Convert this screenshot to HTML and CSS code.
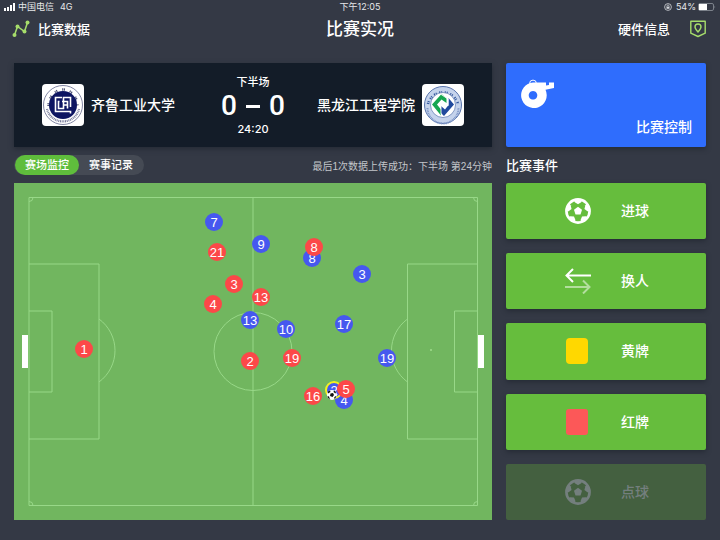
FILE: index.html
```html
<!DOCTYPE html>
<html lang="zh-CN">
<head>
<meta charset="utf-8">
<meta name="viewport" content="width=device-width, initial-scale=1">
<title>比赛实况</title>
<link rel="stylesheet" href="styles.css">
</head>
<body>
<svg class="defs" width="0" height="0" aria-hidden="true">
  <defs>
    <symbol id="ball" viewBox="0 0 26 26">
      <circle cx="13" cy="13" r="11.6" fill="none" stroke="currentColor" stroke-width="2.6"/>
      <path fill="currentColor" d="M13 8.8l4 2.9-1.5 4.7h-5L9 11.700z"/>
      <g fill="currentColor">
        <path id="patch" d="M8.500 1.500h9L16.200 4.200 13 6.200 9.800 4.200z"/>
        <use href="#patch" transform="rotate(72 13 13)"/>
        <use href="#patch" transform="rotate(144 13 13)"/>
        <use href="#patch" transform="rotate(216 13 13)"/>
        <use href="#patch" transform="rotate(288 13 13)"/>
      </g>
    </symbol>
  </defs>
</svg>
<div class="app">
  <div class="status">
    <div class="status-side">
      <svg width="12" height="8" viewBox="0 0 12 8" fill="#fff" aria-hidden="true"><path d="M0 5h2v3H0zM3 4h2v4H3zM6 2h2v6H6zM9 0h2v8H9z"/></svg>
      <span>中国电信</span><span class="network">4G</span>
    </div>
    <span>下午12:05</span>
    <div class="status-side status-end">
      <svg width="8" height="8" viewBox="0 0 8 8" fill="none" stroke="#d5d8dc" aria-hidden="true"><circle cx="4" cy="4" r="3.400" stroke-width=".8"/><path d="M3 4V3a1 1 0 0 1 2 0v1" stroke-width=".7"/><path d="M2.500 3.800h3v2h-3z" fill="#d5d8dc" stroke="none"/></svg>
      <span class="percent">54%</span>
      <svg width="18" height="8" viewBox="0 0 18 8" aria-hidden="true"><rect x=".5" y=".5" width="15" height="7" rx="1.500" fill="none" stroke="#7c828b"/><path d="M1 1h8v6H1z" fill="#fff"/><path d="M16.500 2.500v3q1.500-1.500 0-3z" fill="#7c828b"/></svg>
    </div>
  </div>
  <header class="header">
    <a class="nav-link" href="#data">
      <svg width="18" height="18" viewBox="0 0 18 18" fill="#a6dd6b" stroke="#a6dd6b" aria-hidden="true"><path d="M2.500 15L5.500 6.500 12.500 11.500 15.500 2.500" fill="none" stroke-width="1.500"/><g stroke="none"><circle cx="2.500" cy="15" r="2"/><circle cx="5.500" cy="6.500" r="2"/><circle cx="12.500" cy="11.500" r="2"/><circle cx="15.500" cy="2.500" r="2"/></g></svg>
      <span>比赛数据</span>
    </a>
    <h1 class="title">比赛实况</h1>
    <a class="nav-link nav-end" href="#hardware">
      <span>硬件信息</span>
      <svg width="16" height="18" viewBox="0 0 16 18" fill="none" stroke="#a6dd6b" stroke-width="1.400" stroke-linejoin="round" aria-hidden="true"><path d="M.8 1.200h14.400v12L8 16.500.8 13.200z"/><path d="M8 12C5.800 9.600 5 8.200 5 7a3 3 0 0 1 6 0c0 1.200-.8 2.600-3 5z"/></svg>
    </a>
  </header>
  <main class="main">
    <section class="score">
      <div class="team">
        <svg class="crest" viewBox="0 0 42 42" aria-hidden="true">
          <rect width="42" height="42" rx="4" fill="#fff"/>
          <circle cx="21" cy="21" r="19.500" fill="#fff" stroke="#62678c" stroke-width=".8"/>
          <path d="M6.500 22A14.500 16.500 0 0 1 35.500 22" fill="none" stroke="#4b4f72" stroke-width="2.400" stroke-dasharray="1 .6 1.200 5"/>
          <path d="M5 25A16.500 16.500 0 0 0 37 25" fill="none" stroke="#777b9b" stroke-width="2.200" stroke-dasharray="1 .7"/>
          <circle cx="21" cy="21" r="14" fill="#0d1562"/>
          <path d="M20 13.500h-6.500v14H19M17.500 17.500h-1v7h5v-11h7v9.500M20 17.500h5.500v7M21.500 21H26M19 27.500h9.500v2" fill="none" stroke="#fff" stroke-width="1.600"/>
        </svg>
        <span>齐鲁工业大学</span>
      </div>
      <div class="result">
        <span class="period">下半场</span>
        <strong class="goals"><span>0</span><span class="dash"></span><span>0</span></strong>
        <span class="clock">24:20</span>
      </div>
      <div class="team team-away">
        <span>黑龙江工程学院</span>
        <svg class="crest" viewBox="0 0 42 42" aria-hidden="true">
          <rect width="42" height="42" rx="4" fill="#fff"/>
          <circle cx="21" cy="21" r="18.500" fill="#c5d3ec" stroke="#5874ad" stroke-width="1"/>
          <path d="M6 20A15.500 15.500 0 0 1 36 20" fill="none" stroke="#34599e" stroke-width="2.600" stroke-dasharray="1.200 .8 1 2.500"/>
          <path d="M5.500 24A15.500 15.500 0 0 0 36.500 24" fill="none" stroke="#7f97c7" stroke-width="2" stroke-dasharray="1 .7"/>
          <circle cx="21" cy="21" r="12.500" fill="#fff" stroke="#5874ad" stroke-width=".7"/>
          <path d="M19.500 10L10 20.500l9 11v-6L15 20.500l4.500-5 5 3.500V14z" fill="#16a650"/>
          <path d="M23.500 10.500L32 20.500 22 32l-3-3v-7l4 3.500 3.500-4.500V14z" fill="#214a9d"/>
          <path d="M18.500 10l7.500 5v7l-3.500-3-3.500 3.500v8" fill="none" stroke="#fff" stroke-width=".9"/>
        </svg>
      </div>
    </section>
    <button class="control" type="button">
      <svg width="36" height="30" viewBox="0 0 36 30" aria-hidden="true">
        <circle cx="13" cy="4.500" r="3.400" fill="none" stroke="#fff" stroke-width="1"/>
        <path fill="#fff" fill-rule="evenodd" d="M13 3.500h13v3l3-.5V3.500h5V9l-8.500 1.800A12.800 12.800 0 1 1 13 3.500zm0 8.500a4.300 4.300 0 1 0 .01 0z"/>
      </svg>
      <span>比赛控制</span>
    </button>
    <div class="toolbar">
      <div class="tabs" role="tablist">
        <button class="tab active" type="button" role="tab" aria-selected="true">赛场监控</button>
        <button class="tab" type="button" role="tab" aria-selected="false">赛事记录</button>
      </div>
      <span class="note">最后1次数据上传成功：下半场 第24分钟</span>
    </div>
    <h2 class="events-title">比赛事件</h2>
    <svg class="pitch" viewBox="0 0 478 337">
      <g class="lines">
        <path d="M15 14.500H463.500V322.500H15zM239 14.500v308M15 81h70v175H15M15 128h23v81H15M463.500 81H393.500v175h70M463.500 128h-23v81h23"/>
        <circle cx="239" cy="168.500" r="39"/>
        <path d="M85 136a39 39 0 0 1 0 63M393.500 136a39 39 0 0 0 0 63M15 18.500a4 4 0 0 0 4-4M15 318.500a4 4 0 0 1 4 4M463.500 18.500a4 4 0 0 1-4-4M463.500 318.500a4 4 0 0 0-4 4"/>
      </g>
      <circle cx="417" cy="167" r="1" fill="#a0dd8d"/>
      <path d="M8 152h6v33H8zM464 152h6v33h-6z" fill="#fff"/>
      <g class="player blue" transform="translate(200 39)"><circle r="9"/><text y="5">7</text></g>
      <g class="player red" transform="translate(203 69)"><circle r="9"/><text y="5">21</text></g>
      <g class="player blue" transform="translate(247 61)"><circle r="9"/><text y="5">9</text></g>
      <g class="player blue" transform="translate(298 75)"><circle r="9"/><text y="5">8</text></g>
      <g class="player red" transform="translate(300 64)"><circle r="9"/><text y="5">8</text></g>
      <g class="player blue" transform="translate(348 91)"><circle r="9"/><text y="5">3</text></g>
      <g class="player red" transform="translate(220 101)"><circle r="9"/><text y="5">3</text></g>
      <g class="player red" transform="translate(247 114)"><circle r="9"/><text y="5">13</text></g>
      <g class="player red" transform="translate(199 121)"><circle r="9"/><text y="5">4</text></g>
      <g class="player blue" transform="translate(236 137)"><circle r="9"/><text y="5">13</text></g>
      <g class="player blue" transform="translate(272 146)"><circle r="9"/><text y="5">10</text></g>
      <g class="player blue" transform="translate(330 141)"><circle r="9"/><text y="5">17</text></g>
      <g class="player red" transform="translate(70 166)"><circle r="9"/><text y="5">1</text></g>
      <g class="player red" transform="translate(236 178)"><circle r="9"/><text y="5">2</text></g>
      <g class="player red" transform="translate(278 175)"><circle r="9"/><text y="5">19</text></g>
      <g class="player blue" transform="translate(373 175)"><circle r="9"/><text y="5">19</text></g>
      <g class="player red" transform="translate(299 213)"><circle r="9"/><text y="5">16</text></g>
      <g class="player blue" transform="translate(330 217)"><circle r="9"/><text y="5">4</text></g>
      <g class="player blue holder" transform="translate(320 207)"><circle r="8"/><text y="5">2</text></g>
      <g class="player red" transform="translate(332 206)"><circle r="9"/><text y="5">5</text></g>
      <g transform="translate(318 212)"><circle r="5" fill="#fff"/><path fill="#111" d="M-1.500-1.500l2.500-.5 1 2-1.500 2-2.500-1zM-4-3.500l2-1 .5 1.500L-4-1.500zM2-4.500L4-3 3.500-1.500 1.500-3zM3 1.500l1.500-.5L3 4 2 3zM-4.500 1l1.500.5L-2 4.500-4 3z"/></g>
    </svg>
    <div class="events">
      <button class="event" type="button"><svg class="icon" aria-hidden="true"><use href="#ball"/></svg><span>进球</span></button>
      <button class="event" type="button"><svg class="icon" viewBox="0 0 26 26" fill="none" stroke="#fff" stroke-width="2" aria-hidden="true"><path d="M26 7.500H1.500M8 1L1.500 7.500 8 14"/><path opacity=".5" d="M0 19h24.500M18 12.500l6.500 6.500-6.500 6.500"/></svg><span>换人</span></button>
      <button class="event" type="button"><svg class="icon" viewBox="0 0 26 26" aria-hidden="true"><rect x="1" width="22" height="26" rx="4" fill="#ffd800"/></svg><span>黄牌</span></button>
      <button class="event" type="button"><svg class="icon" viewBox="0 0 26 26" aria-hidden="true"><rect x="1" width="22" height="26" rx="3" fill="#fc5858"/></svg><span>红牌</span></button>
      <button class="event" type="button" disabled><svg class="icon" aria-hidden="true"><use href="#ball"/></svg><span>点球</span></button>
    </div>
  </main>
</div>
</body>
</html>
```
FILE: styles.css
```css
* {
  box-sizing: border-box;
}

body {
  margin: 0;
  background: #343945;
  color: #fff;
  font-family: Inter, "Noto Sans CJK SC", sans-serif;
  font-size: 13px;
  font-weight: 500;
}

button {
  border: 0;
  padding: 0;
  font: inherit;
  color: inherit;
  background: none;
}

h1,
h2 {
  margin: 0;
}

svg {
  display: block;
  flex: none;
}

.defs {
  position: absolute;
}

.app {
  min-height: 100vh;
}

.status {
  display: grid;
  grid-template-columns: 1fr auto 1fr;
  align-items: center;
  height: 14px;
  padding: 0 4px;
  font-size: 9px;
  font-weight: 400;
  line-height: 14px;
  color: #e6e8ea;
}

.status-side {
  display: flex;
  align-items: center;
  gap: 2px;
}

.network {
  margin-left: 4px;
}

.status-end {
  justify-content: flex-end;
}

.percent {
  margin-left: 2px;
}

.header {
  display: grid;
  grid-template-columns: 1fr auto 1fr;
  align-items: center;
  height: 49px;
  padding: 0 14px 19px;
}

.nav-link {
  display: flex;
  align-items: center;
  gap: 8px;
  color: inherit;
  line-height: 20px;
  text-decoration: none;
}

.nav-link svg {
  margin-left: -2px;
}

.nav-end {
  justify-content: flex-end;
  gap: 22px;
}

.title {
  font-size: 17px;
  font-weight: 500;
  line-height: 26px;
}

.main {
  display: grid;
  grid-template-columns: minmax(0, 1fr) 200px;
  column-gap: 14px;
  padding: 0 14px 20px;
}

.score {
  display: grid;
  grid-template-columns: 1fr auto 1fr;
  align-items: center;
  padding: 0 28px;
  background: #131c28;
  box-shadow: 0 2px 5px #252b35;
}

.team {
  display: flex;
  align-items: center;
  gap: 7px;
  font-size: 14px;
  line-height: 20px;
}

.team-away {
  justify-content: flex-end;
}

.crest {
  width: 42px;
  height: 42px;
}

.result {
  display: flex;
  flex-direction: column;
  align-items: center;
  font-size: 11px;
}

.period {
  line-height: 16px;
}

.goals {
  display: flex;
  align-items: center;
  gap: 9px;
  font-family: Roboto, sans-serif;
  font-size: 28px;
  font-weight: 500;
  line-height: 32px;
}

.dash {
  width: 14px;
  height: 3px;
  background: #fff;
}

.clock {
  line-height: 14px;
}

.control {
  display: flex;
  flex-direction: column;
  justify-content: space-between;
  min-height: 84px;
  padding: 16px 14px 9px;
  border-radius: 2px;
  background: #2f6dfd;
  box-shadow: 0 2px 5px #252b35;
  font-size: 14px;
  line-height: 22px;
}

.control span {
  align-self: flex-end;
}

.toolbar {
  display: flex;
  align-items: center;
  justify-content: space-between;
  height: 36px;
}

.tabs {
  display: flex;
  padding: 0 1px;
  border-radius: 10px;
  background: #454a54;
}

.tab {
  width: 64px;
  height: 20px;
  border-radius: 10px;
  font-size: 11px;
  line-height: 20px;
}

.active {
  background: #5fbd3c;
}

.note {
  font-family: "Liberation Sans", "Noto Sans CJK SC", sans-serif;
  font-size: 10px;
  font-weight: 400;
  color: #c3c6ca;
}

.events-title {
  font-size: 13px;
  font-weight: 500;
  line-height: 36px;
}

.pitch {
  width: 100%;
  height: auto;
  background: #71b65f;
}

.lines {
  fill: none;
  stroke: #98d888;
  stroke-width: 1;
}

.player text {
  fill: #fff;
  font-family: "Liberation Sans", sans-serif;
  font-size: 13px;
  font-weight: 400;
  text-anchor: middle;
}

.blue {
  fill: #4658ef;
}

.red {
  fill: #fc4848;
}

.holder circle {
  stroke: #f4f020;
  stroke-width: 2;
}

.events {
  display: grid;
  grid-auto-rows: 1fr;
  gap: 14px;
}

.event {
  display: flex;
  align-items: center;
  justify-content: center;
  gap: 30px;
  padding-left: 2px;
  border-radius: 2px;
  background: #66bd3d;
  box-shadow: 0 2px 5px #252b35;
  font-size: 14px;
  line-height: 20px;
}

.event:disabled {
  background: #446040;
  box-shadow: none;
  color: #747f7e;
}

.icon {
  width: 26px;
  height: 26px;
}
```
